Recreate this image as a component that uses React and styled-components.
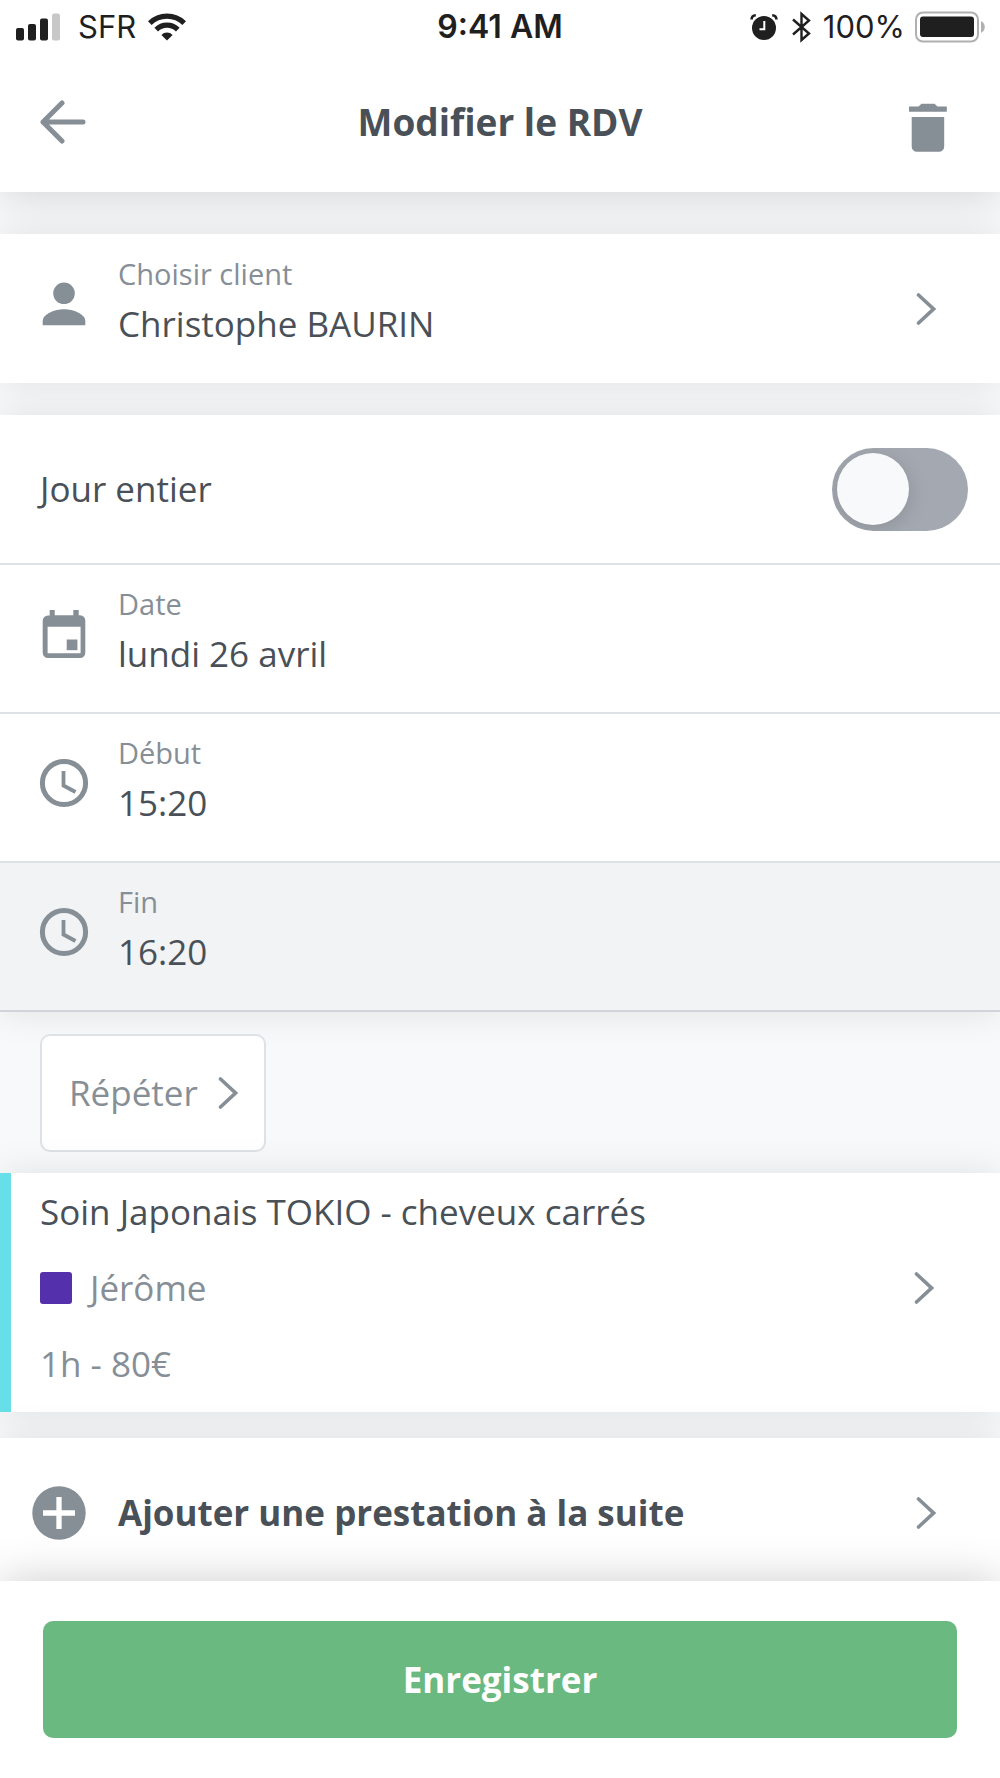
import React, { useState } from 'react';
import styled, { createGlobalStyle } from 'styled-components';


const GlobalStyle = createGlobalStyle`
    * {
        box-sizing: border-box;
    }

    body {
        margin: 0;
        background: #F8F9FA;
        color: #495057;
        font-family: "Open Sans", sans-serif;
        font-size: 35px;
        line-height: 48px;
    }

    button, input {
        margin: 0;
        padding: 0;
        border: 0;
        border-radius: 0;
        background: none;
        color: inherit;
        font: inherit;
        text-align: left;
    }

    button {
        cursor: pointer;
    }

    svg {
        display: block;
        flex: none;
    }
`;

const Page = styled.div`
    display: flex;
    flex-direction: column;
    min-height: 100vh;
`;

const Header = styled.header`
    background: #fff;
    box-shadow: 0 4px 40px rgba(0, 0, 0, 0.15);
`;

const StatusBar = styled.div`
    display: grid;
    grid-template-columns: 1fr auto 1fr;
    align-items: center;
    height: 54px;
    padding: 0 15px;
    color: #1F1F1F;
    font-family: Inter, sans-serif;
    font-size: 31px;
`;

const StatusGroup = styled.div`
    display: flex;
    align-items: center;
    justify-content: ${props => props.$end ? 'flex-end' : 'flex-start'};
`;

const Carrier = styled.span`
    margin: 0 12px 0 17px;
`;

const Time = styled.span`
    font-size: 32px;
    font-weight: 600;
`;

const Percent = styled.span`
    margin: 0 10px 0 11px;
`;

const TitleBar = styled.div`
    display: flex;
    align-items: center;
    justify-content: space-between;
    padding: 35px 40px 37px;
`;

const Title = styled.h1`
    margin: 0;
    font-size: 37px;
    font-weight: bold;
    line-height: 66px;
`;

const IconButton = styled.button`
    display: flex;
    align-items: center;
    justify-content: ${props => props.$end ? 'flex-end' : 'flex-start'};
    width: 64px;
    height: 64px;
    color: #868E96;
`;

const Main = styled.main`
    flex: 1;
`;

const Card = styled.section`
    margin-top: ${props => props.$gap}px;
    background: #fff;
    box-shadow: 0 0 36px rgba(0, 0, 0, 0.1);
`;

const Row = styled.div`
    display: flex;
    align-items: center;
    width: 100%;
    min-height: 149px;
    padding: 0 64px 0 32px;
    border-bottom: ${props => props.$line ? `2px solid ${props.$line}` : '0'};
    background: ${props => props.$active ? '#F1F3F5' : 'transparent'};
`;

const RowIcon = styled.span`
    display: block;
    margin: 0 22px 10px 0;
    color: #868E96;
`;

const FieldText = styled.span`
    display: flex;
    flex: 1;
    flex-direction: column;
    min-width: 0;
    margin-bottom: 20px;
`;

const Label = styled.label`
    color: #868E96;
    font-size: 29px;
    line-height: 50px;
`;

const Value = styled.span`
    line-height: 50px;
`;

const Input = styled.input`
    width: 100%;
    height: 50px;
    outline: none;
`;

const SwitchRow = styled.label`
    display: flex;
    align-items: center;
    justify-content: space-between;
    min-height: 150px;
    padding: 0 32px 0 40px;
    border-bottom: 2px solid #DEE2E6;
`;

const Switch = styled.input`
    appearance: none;
    display: flex;
    align-items: center;
    width: 136px;
    height: 83px;
    padding: 0 5px;
    border-radius: 42px;
    background: #A4A9B1;
    overflow: hidden;
    cursor: pointer;

    &::before {
        content: "";
        width: 72px;
        height: 72px;
        border-radius: 50%;
        background: #F8F9FA;
        box-shadow: 0 4px 20px rgba(0, 0, 0, 0.15);
    }

    &:checked {
        justify-content: flex-end;
        background: #69B980;
    }
`;

const RepeatZone = styled.div`
    padding: 22px 40px 21px;
`;

const RepeatButton = styled.button`
    display: flex;
    align-items: center;
    gap: 20px;
    height: 118px;
    padding: 0 26px 0 27px;
    border: 2px solid #DEE2E6;
    border-radius: 10px;
    background: #fff;
    color: #868E96;
`;

const Service = styled.button`
    display: flex;
    align-items: center;
    justify-content: space-between;
    width: 100%;
    padding: 1px 66px 10px 29px;
    border-left: 11px solid #66DFE9;
    line-height: 76px;
`;

const ServiceLine = styled.span`
    display: flex;
    align-items: center;
    gap: 18px;
    color: ${props => props.$muted ? '#868E96' : 'inherit'};
`;

const Swatch = styled.span`
    width: 32px;
    height: 32px;
    border-radius: 3px;
    background: #5530AD;
`;

const AddButton = styled.button`
    display: flex;
    align-items: center;
    width: 100%;
    min-height: 143px;
    padding: 6px 64px 0 32px;
    font-weight: bold;
`;

const AddText = styled.span`
    flex: 1;
`;

const AddIcon = styled.svg`
    margin-right: 32px;
`;

const Footer = styled.footer`
    position: relative;
    padding: 40px 43px;
    background: #fff;
    box-shadow: 0 0 44px rgba(0, 0, 0, 0.2);
`;

const SaveButton = styled.button`
    width: 100%;
    height: 117px;
    border-radius: 10px;
    background: #69B980;
    color: #fff;
    font-weight: bold;
    text-align: center;
`;


const Chevron = () => (
    <svg width="20" height="34" viewBox="0 0 20 34" fill="none" stroke="#868E96" strokeWidth="3.6" strokeLinecap="round" aria-hidden="true">
        <path d="M2.5 3 17.5 17 2.5 31" />
    </svg>
);

const ClockIcon = () => (
    <svg width="64" height="64" viewBox="0 0 64 64" fill="none" stroke="currentColor" strokeWidth="5">
        <circle cx="32" cy="32" r="21.6" />
        <path d="M31.5 20v14.500L43.500 41" strokeWidth="3.8" />
    </svg>
);

const CalendarIcon = () => (
    <svg width="64" height="64" viewBox="0 0 64 64" fill="currentColor">
        <path fillRule="evenodd" d="M17.700 8h5v5.300h18.600V8h5.400v5.300H48a5.300 5.300 0 0 1 5.300 5.300v32A5.300 5.300 0 0 1 48 56H16a5.300 5.300 0 0 1-5.300-5.300v-32a5.300 5.300 0 0 1 5.300-5.300h1.700zM15.600 24.700v26.600h33V24.700z" />
        <path d="M34.700 37.500h10.700v10.700H34.700z" />
    </svg>
);

const PersonIcon = () => (
    <svg width="64" height="64" viewBox="0 0 64 64" fill="currentColor">
        <circle cx="32" cy="21.300" r="10.800" />
        <path d="M32 37.300c-9 0-21.300 4.500-21.300 12v4h42.600v-4c0-7.500-12.300-12-21.300-12z" />
    </svg>
);


function TimeField({ id, label, value, icon, line, active }) {
    const [text, setText] = useState(value);

    return (
        <Row $line={line} $active={active}>
            <RowIcon>{icon}</RowIcon>
            <FieldText>
                <Label htmlFor={id}>{label}</Label>
                <Input id={id} type="text" value={text} onChange={(e) => setText(e.target.value)} />
            </FieldText>
        </Row>
    );
}

function PhoneStatus() {
    return (
        <StatusBar>
            <StatusGroup>
                <svg width="46" height="28" viewBox="0 0 46 28" fill="currentColor">
                    <rect x="1" y="15" width="8" height="12.500" rx="2" />
                    <rect x="13" y="11" width="8" height="16.500" rx="2" />
                    <rect x="25" y="5.500" width="8" height="22" rx="2" />
                    <rect x="37" y="0.500" width="8" height="27" rx="2" fill="#C8C8C8" />
                </svg>
                <Carrier>SFR</Carrier>
                <svg width="38" height="28" viewBox="0 0 38 28" fill="none" stroke="currentColor" strokeWidth="5.200">
                    <path d="M1.800 10.200a24.500 24.500 0 0 1 34.400 0" />
                    <path d="M8.200 16.600a15.400 15.400 0 0 1 21.600 0" />
                    <path d="M19 27.500l-5.600-5.600a8 8 0 0 1 11.200 0z" fill="currentColor" stroke="none" />
                </svg>
            </StatusGroup>
            <Time>9:41 AM</Time>
            <StatusGroup $end>
                <svg width="28" height="28" viewBox="0 0 28 28" fill="none" stroke="currentColor">
                    <circle cx="14" cy="15" r="12" fill="currentColor" stroke="none" />
                    <path d="M14.300 8v8.200H9.500" stroke="#fff" strokeWidth="2" />
                    <path d="M1.600 6.500C1.600 3.500 3 2.300 5.800 2.200M26.400 6.500c0-3-1.400-4.200-4.200-4.300" strokeWidth="2.600" />
                </svg>
                <svg width="34" height="32" viewBox="0 0 34 32" fill="none" stroke="currentColor" strokeWidth="2.400">
                    <path d="M15 8.500 31 22.500l-7.500 6.500V3l7.500 6.500-16 14" />
                </svg>
                <Percent>100%</Percent>
                <svg width="70" height="32" viewBox="0 0 70 32">
                    <rect x="1" y="1.500" width="62" height="29" rx="7" fill="none" stroke="#B0B0B0" strokeWidth="2" />
                    <rect x="5" y="5.500" width="54" height="20.500" rx="3" fill="currentColor" />
                    <path d="M66 10c5 2.500 5 9.500 0 12z" fill="#B0B0B0" />
                </svg>
            </StatusGroup>
        </StatusBar>
    );
}

function App() {
    const [allDay, setAllDay] = useState(false);

    return (
        <Page>
            <GlobalStyle />
            <Header>
                <PhoneStatus />
                <TitleBar>
                    <IconButton type="button" aria-label="Retour">
                        <svg width="48" height="44" viewBox="0 0 48 44" fill="none" stroke="currentColor" strokeWidth="5" strokeLinecap="round" strokeLinejoin="round">
                            <path d="M22 3 3 22l19 19M3 22h40" />
                        </svg>
                    </IconButton>
                    <Title>Modifier le RDV</Title>
                    <IconButton type="button" aria-label="Supprimer" $end>
                        <svg width="51" height="62" viewBox="0 0 51 62" fill="currentColor">
                            <path d="M2.700 26h32.500v29.500a5.300 5.300 0 0 1-5.300 5.300H8a5.300 5.300 0 0 1-5.300-5.300zM0 15.500h9.500l3-2.800h13l3 2.800h9.300v5.300H0z" />
                        </svg>
                    </IconButton>
                </TitleBar>
            </Header>

            <Main>
                {/* client */}
                <Card $gap={42}>
                    <Row as="button" type="button">
                        <RowIcon><PersonIcon /></RowIcon>
                        <FieldText>
                            <Label as="span">Choisir client</Label>
                            <Value>Christophe BAURIN</Value>
                        </FieldText>
                        <Chevron />
                    </Row>
                </Card>

                {/* date and time */}
                <Card $gap={32}>
                    <SwitchRow>
                        Jour entier
                        <Switch type="checkbox" role="switch" checked={allDay} onChange={() => setAllDay(!allDay)} />
                    </SwitchRow>
                    <TimeField id="date" label="Date" value="lundi 26 avril" icon={<CalendarIcon />} line="#DEE2E6" />
                    <TimeField id="start" label="Début" value="15:20" icon={<ClockIcon />} line="#DEE2E6" />
                    <TimeField id="end" label="Fin" value="16:20" icon={<ClockIcon />} line="#CED4DA" active />
                </Card>

                <RepeatZone>
                    <RepeatButton type="button">
                        Répéter
                        <Chevron />
                    </RepeatButton>
                </RepeatZone>

                {/* booked service */}
                <Card $gap={0}>
                    <Service type="button">
                        <span>
                            <ServiceLine>Soin Japonais TOKIO - cheveux carrés</ServiceLine>
                            <ServiceLine $muted><Swatch />Jérôme</ServiceLine>
                            <ServiceLine $muted>1h - 80€</ServiceLine>
                        </span>
                        <Chevron />
                    </Service>
                </Card>

                <Card $gap={26}>
                    <AddButton type="button">
                        <AddIcon width="54" height="54" viewBox="0 0 54 54">
                            <circle cx="27" cy="27" r="26.700" fill="#868E96" />
                            <path d="M27 11v32M11 27h32" stroke="#fff" strokeWidth="5.300" />
                        </AddIcon>
                        <AddText>Ajouter une prestation à la suite</AddText>
                        <Chevron />
                    </AddButton>
                </Card>
            </Main>

            <Footer>
                <SaveButton type="button">Enregistrer</SaveButton>
            </Footer>
        </Page>
    );
}

export default App;
